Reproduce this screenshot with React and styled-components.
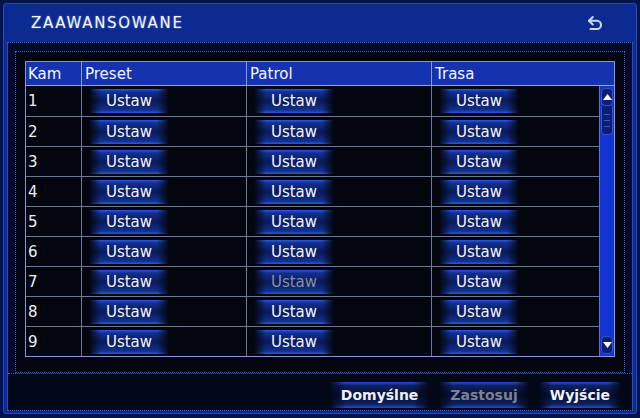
import styled, { createGlobalStyle } from "styled-components";

const GlobalStyle = createGlobalStyle`
  html, body {
    margin: 0;
    padding: 0;
    background: #061650;
  }
  body {
    font-family: "DejaVu Sans", Verdana, sans-serif;
  }
`;

const StyledScreen = styled.div`
  width: 640px;
  height: 418px;
  box-sizing: border-box;
  padding: 3px 3px 4px 3px;
  background: #051448;
  display: flex;
`;

const StyledWindow = styled.div`
  flex: 1;
  display: flex;
  flex-direction: column;
  border: 1px solid #2846c4;
  border-radius: 3px;
  background: #0b2a92;
  padding: 0 3px 2px 3px;
`;

const StyledTitleBar = styled.div`
  height: 39px;
  display: flex;
  align-items: center;
  justify-content: space-between;
  padding: 0 29px 0 24px;
  color: #f2f4ff;
  font-size: 15px;
  letter-spacing: 1.7px;
  text-shadow: 0 0 2px rgba(200, 210, 255, 0.5);
`;

const StyledBody = styled.div`
  flex: 1;
  display: flex;
  flex-direction: column;
  border: 1px dotted #4a6ad6;
  border-left: 1px solid #2a4acc;
  border-right: 1px solid #2a4acc;
  background: #020a2a;
  padding: 8px 7px 0 7px;
`;

const StyledFrame = styled.div`
  border: 1px dotted #4262cc;
  background: #02050f;
  padding: 9px 9px 15px 9px;
`;

const StyledTable = styled.div`
  border: 1px solid #8496d4;
  display: flex;
  flex-direction: column;
`;

const StyledHeader = styled.div`
  display: grid;
  grid-template-columns: 55px 165px 185px 1fr;
  height: 23px;
  background: #1532b0;
  border-bottom: 1px solid #8fa2e4;
`;

const StyledHeadCell = styled.div`
  display: flex;
  align-items: center;
  padding-left: ${(p) => (p.$first ? "2px" : "3px")};
  color: #f4f6ff;
  font-size: 15px;
  border-left: ${(p) => (p.$first ? "none" : "1px solid #8a9ad0")};
`;

const StyledRowsArea = styled.div`
  display: flex;
`;

const StyledRows = styled.div`
  flex: 1;
  display: flex;
  flex-direction: column;
`;

const StyledRow = styled.div`
  display: grid;
  grid-template-columns: 55px 165px 185px 1fr;
  height: 30px;
  box-sizing: border-box;
  border-top: ${(p) => (p.$first ? "none" : "1px solid #6c7894")};
  background: #03060e;
`;

const StyledCell = styled.div`
  display: flex;
  align-items: center;
  padding-left: ${(p) => (p.$num ? "2px" : "8px")};
  color: #eef0f8;
  font-size: 15px;
  border-left: ${(p) => (p.$num ? "none" : "1px solid #6c7894")};
`;

const StyledSetButton = styled.div`
  width: 78px;
  height: 24px;
  display: flex;
  align-items: center;
  justify-content: center;
  font-size: 15px;
  color: ${(p) => (p.$disabled ? "#8a8fa0" : "#f2f4ff")};
  background:
    linear-gradient(
      to right,
      rgba(3, 6, 14, 0.9) 0,
      rgba(3, 6, 14, 0) 14%,
      rgba(3, 6, 14, 0) 86%,
      rgba(3, 6, 14, 0.9) 100%
    ),
    linear-gradient(
      to bottom,
      #2c58e6 0,
      #12308e 12%,
      #0a1a5a 50%,
      #12308e 88%,
      #2c58e6 100%
    );
`;

const StyledScrollbar = styled.div`
  width: 15px;
  background: #1234d2;
  border-left: 1px solid #5a72d8;
  display: flex;
  flex-direction: column;
  justify-content: space-between;
  padding: 2px 0;
  box-sizing: border-box;
`;

const StyledScrollTop = styled.div`
  display: flex;
  flex-direction: column;
`;

const StyledArrow = styled.div`
  height: 16px;
  margin: 0 1px;
  border-radius: 4px;
  background: #0c1e78;
  border: 1px solid #3652c8;
  display: flex;
  align-items: center;
  justify-content: center;
`;

const StyledThumb = styled.div`
  height: 28px;
  margin: 0 1px;
  border-radius: 0 0 4px 4px;
  background: #0c1e78;
  border: 1px solid #3652c8;
  border-top: none;
  display: flex;
  flex-direction: column;
  justify-content: center;
  gap: 5px;
  padding: 0 2px;
`;

const StyledThumbLine = styled.div`
  height: 1px;
  background: #3a56c0;
`;

const StyledFooter = styled.div`
  height: 37px;
  display: flex;
  align-items: center;
  justify-content: flex-end;
  gap: 12px;
  padding: 5px 12px 0 0;
  box-sizing: border-box;
  border-top: 1px dotted #3454c4;
  margin: 0 -7px;
  background: #030818;
`;

const StyledFooterButton = styled.div`
  height: 26px;
  padding: 0 10px;
  display: flex;
  align-items: center;
  font-size: 14px;
  font-weight: bold;
  color: ${(p) => (p.$disabled ? "#7c8294" : "#eef0fa")};
  background:
    linear-gradient(
      to right,
      rgba(3, 8, 24, 0.9) 0,
      rgba(3, 8, 24, 0) 15%,
      rgba(3, 8, 24, 0) 85%,
      rgba(3, 8, 24, 0.9) 100%
    ),
    linear-gradient(
      to bottom,
      #284ccc 0,
      #0e2160 14%,
      #060f34 50%,
      #0e2160 86%,
      #284ccc 100%
    );
`;

function BackIcon() {
  return (
    <svg width="18" height="18" viewBox="0 0 24 24" fill="none">
      <path
        d="M9 4 4 9l5 5"
        stroke="#cdd8ff"
        strokeWidth="2.8"
        strokeLinecap="round"
        strokeLinejoin="round"
      />
      <path
        d="M4 9h10.5a5.5 5.5 0 0 1 0 11H6"
        stroke="#cdd8ff"
        strokeWidth="2.8"
        strokeLinecap="round"
        strokeLinejoin="round"
      />
    </svg>
  );
}

function Triangle({ down }) {
  return (
    <svg width="9" height="6" viewBox="0 0 9 6">
      <path d={down ? "M0 0h9L4.5 6z" : "M4.5 0 9 6H0z"} fill="#ffffff" />
    </svg>
  );
}

const rows = [1, 2, 3, 4, 5, 6, 7, 8, 9];

export default function App() {
  return (
    <>
      <GlobalStyle />
      <StyledScreen>
        <StyledWindow>
          <StyledTitleBar>
            <span>ZAAWANSOWANE</span>
            <BackIcon />
          </StyledTitleBar>
          <StyledBody>
            <StyledFrame>
              <StyledTable>
                <StyledHeader>
                  <StyledHeadCell $first>Kam</StyledHeadCell>
                  <StyledHeadCell>Preset</StyledHeadCell>
                  <StyledHeadCell>Patrol</StyledHeadCell>
                  <StyledHeadCell>Trasa</StyledHeadCell>
                </StyledHeader>
                <StyledRowsArea>
                  <StyledRows>
                    {rows.map((n) => (
                      <StyledRow key={n} $first={n === 1}>
                        <StyledCell $num>{n}</StyledCell>
                        <StyledCell>
                          <StyledSetButton>Ustaw</StyledSetButton>
                        </StyledCell>
                        <StyledCell>
                          <StyledSetButton $disabled={n === 7}>Ustaw</StyledSetButton>
                        </StyledCell>
                        <StyledCell>
                          <StyledSetButton>Ustaw</StyledSetButton>
                        </StyledCell>
                      </StyledRow>
                    ))}
                  </StyledRows>
                  <StyledScrollbar>
                    <StyledScrollTop>
                      <StyledArrow>
                        <Triangle />
                      </StyledArrow>
                      <StyledThumb>
                        <StyledThumbLine />
                        <StyledThumbLine />
                        <StyledThumbLine />
                      </StyledThumb>
                    </StyledScrollTop>
                    <StyledArrow>
                      <Triangle down />
                    </StyledArrow>
                  </StyledScrollbar>
                </StyledRowsArea>
              </StyledTable>
            </StyledFrame>
            <StyledFooter>
              <StyledFooterButton>Domyślne</StyledFooterButton>
              <StyledFooterButton $disabled>Zastosuj</StyledFooterButton>
              <StyledFooterButton>Wyjście</StyledFooterButton>
            </StyledFooter>
          </StyledBody>
        </StyledWindow>
      </StyledScreen>
    </>
  );
}
